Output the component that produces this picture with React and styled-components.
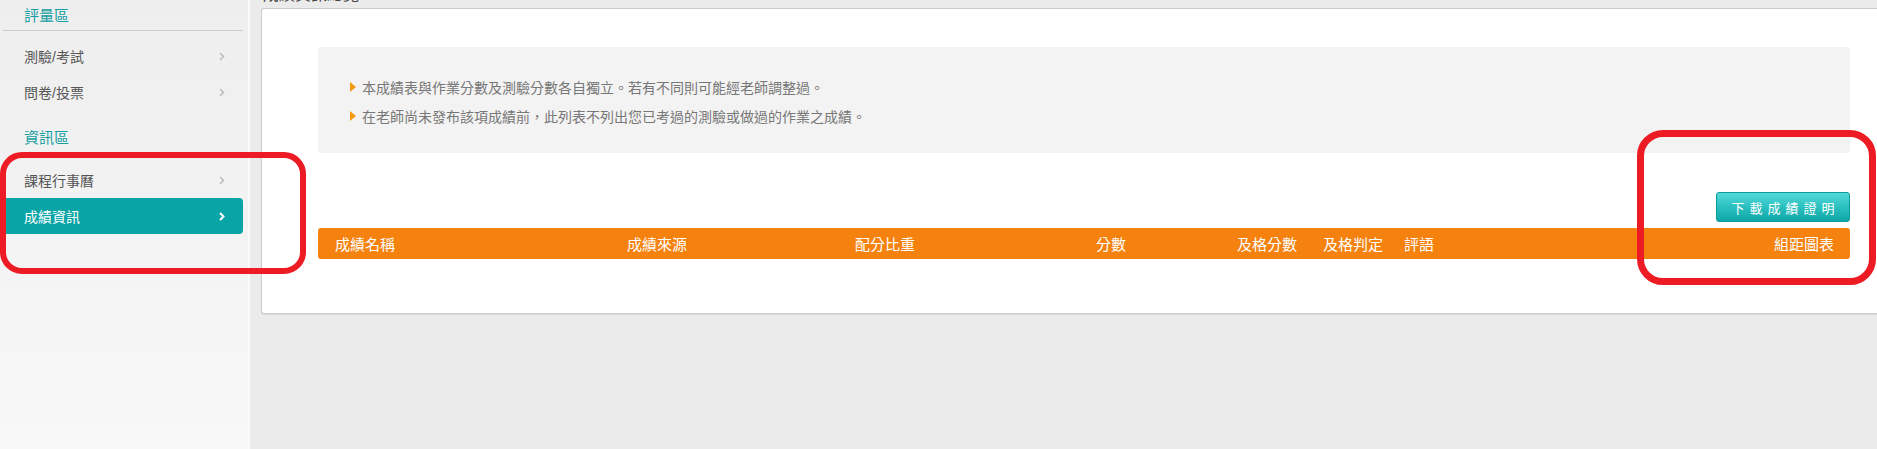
import React from 'react';
import styled, { createGlobalStyle } from 'styled-components';

const GlobalStyle = createGlobalStyle`
  html, body {
    margin: 0;
    padding: 0;
  }
  body {
    font-family: "Liberation Sans", "Noto Sans CJK TC", sans-serif;
    background: #ebebeb;
  }
`;

const Page = styled.div`
  position: relative;
  display: flex;
  width: 1877px;
  height: 449px;
  overflow: hidden;
`;

const Sidebar = styled.nav`
  width: 248px;
  flex-shrink: 0;
  border-right: 2px solid #fafafa;
  background: linear-gradient(to bottom, #eeeeee 0%, #f8f8f8 100%);
`;

const SectionTitle = styled.div`
  height: ${p => p.height}px;
  padding-left: 24px;
  display: flex;
  align-items: center;
  font-size: 15px;
  color: #179fa3;
  margin: ${p => p.margin || '0'};
`;

const Divider = styled.div`
  height: 1px;
  margin: 1px 5px 0 3px;
  background: #cccccc;
`;

const MenuList = styled.ul`
  list-style: none;
  margin: 0;
  padding: ${p => p.padding || '0'};
`;

const MenuItem = styled.li`
  height: 36px;
  margin: 0 5px 0 3px;
  padding: 0 18px 0 21px;
  display: flex;
  align-items: center;
  justify-content: space-between;
  font-size: 14px;
  border-radius: 4px;
  color: ${p => (p.active ? '#ffffff' : '#555555')};
  background: ${p => (p.active ? '#08a4a6' : 'transparent')};
`;

const Main = styled.main`
  flex: 1;
  padding-left: 11px;
  display: flex;
  flex-direction: column;
`;

const PageTitle = styled.div`
  height: 8px;
  padding-bottom: 5px;
  box-sizing: border-box;
  display: flex;
  align-items: flex-end;
  padding-left: 2px;
  font-size: 16px;
  line-height: 16px;
  color: #444444;
`;

const Panel = styled.section`
  height: 306px;
  box-sizing: border-box;
  background: #ffffff;
  border: 1px solid #cdcdcd;
  border-right: 0;
  border-radius: 3px 0 0 3px;
  box-shadow: 0 1px 1px rgba(0, 0, 0, 0.08);
  padding: 38px 27px 0 56px;
  display: flex;
  flex-direction: column;
`;

const Notice = styled.div`
  background: #f3f3f3;
  border-radius: 4px;
  padding: 25px 0 23px 32px;
  height: 106px;
  box-sizing: border-box;
`;

const NoticeLine = styled.div`
  display: flex;
  align-items: center;
  height: 29px;
  font-size: 14px;
  color: #777777;
`;

const Arrow = styled.span`
  width: 0;
  height: 0;
  border-top: 5px solid transparent;
  border-bottom: 5px solid transparent;
  border-left: 6px solid #f39a12;
  margin-right: 6px;
`;

const Actions = styled.div`
  display: flex;
  justify-content: flex-end;
  margin-top: 39px;
`;

const DownloadButton = styled.button`
  width: 134px;
  height: 30px;
  padding: 0 0 0 5px;
  border: 1px solid #0c9b9b;
  border-radius: 3px;
  background: linear-gradient(to bottom, #55d9d9 0%, #2bc0c0 50%, #0fa7a7 100%);
  color: #ffffff;
  font-family: inherit;
  font-size: 13px;
  letter-spacing: 5px;
  cursor: pointer;
`;

const HeaderBar = styled.div`
  margin-top: 6px;
  height: 31px;
  border-radius: 3px;
  background: #f5820f;
  color: #ffffff;
  font-size: 15px;
  display: grid;
  grid-template-columns: 292px 228px 241px 141px 86px 81px 1fr auto;
  align-items: center;
  padding: 0 16px 0 17px;
`;

const Overlay = styled.div`
  position: absolute;
  left: ${p => p.x}px;
  top: ${p => p.y}px;
  width: ${p => p.w}px;
  height: ${p => p.h}px;
  box-sizing: border-box;
  border: ${p => p.stroke}px solid #ed1c24;
  border-radius: ${p => p.r}px;
  pointer-events: none;
`;

const Chevron = ({ active }) => (
  <svg width="6" height="9" viewBox="0 0 6 9">
    <polyline
      points="1,1 4.5,4.5 1,8"
      fill="none"
      stroke={active ? '#ffffff' : '#bdbdbd'}
      strokeWidth={active ? 2 : 1.6}
    />
  </svg>
);

const columns = ['成績名稱', '成績來源', '配分比重', '分數', '及格分數', '及格判定', '評語', '', '組距圖表'];

export default function App() {
  return (
    <>
      <GlobalStyle />
      <Page>
        <Sidebar>
          <SectionTitle height={29}>評量區</SectionTitle>
          <Divider />
          <MenuList padding="7px 0 0">
            <MenuItem>測驗/考試<Chevron /></MenuItem>
            <MenuItem>問卷/投票<Chevron /></MenuItem>
          </MenuList>
          <SectionTitle height={40} margin="6px 0 0">資訊區</SectionTitle>
          <MenuList padding="6px 0 0">
            <MenuItem>課程行事曆<Chevron /></MenuItem>
            <MenuItem active>成績資訊<Chevron active /></MenuItem>
          </MenuList>
        </Sidebar>
        <Main>
          <PageTitle>成績資訊總覽</PageTitle>
          <Panel>
            <Notice>
              <NoticeLine><Arrow />本成績表與作業分數及測驗分數各自獨立。若有不同則可能經老師調整過。</NoticeLine>
              <NoticeLine><Arrow />在老師尚未發布該項成績前，此列表不列出您已考過的測驗或做過的作業之成績。</NoticeLine>
            </Notice>
            <Actions>
              <DownloadButton>下載成績證明</DownloadButton>
            </Actions>
            <HeaderBar>
              {columns.filter((c, i) => i !== 7).map((c, i) => (
                <span key={i}>{c}</span>
              ))}
            </HeaderBar>
          </Panel>
        </Main>
        <Overlay x={0} y={152} w={306} h={122} stroke={6} r={22} />
        <Overlay x={1637} y={130} w={239} h={155} stroke={7} r={26} />
      </Page>
    </>
  );
}
